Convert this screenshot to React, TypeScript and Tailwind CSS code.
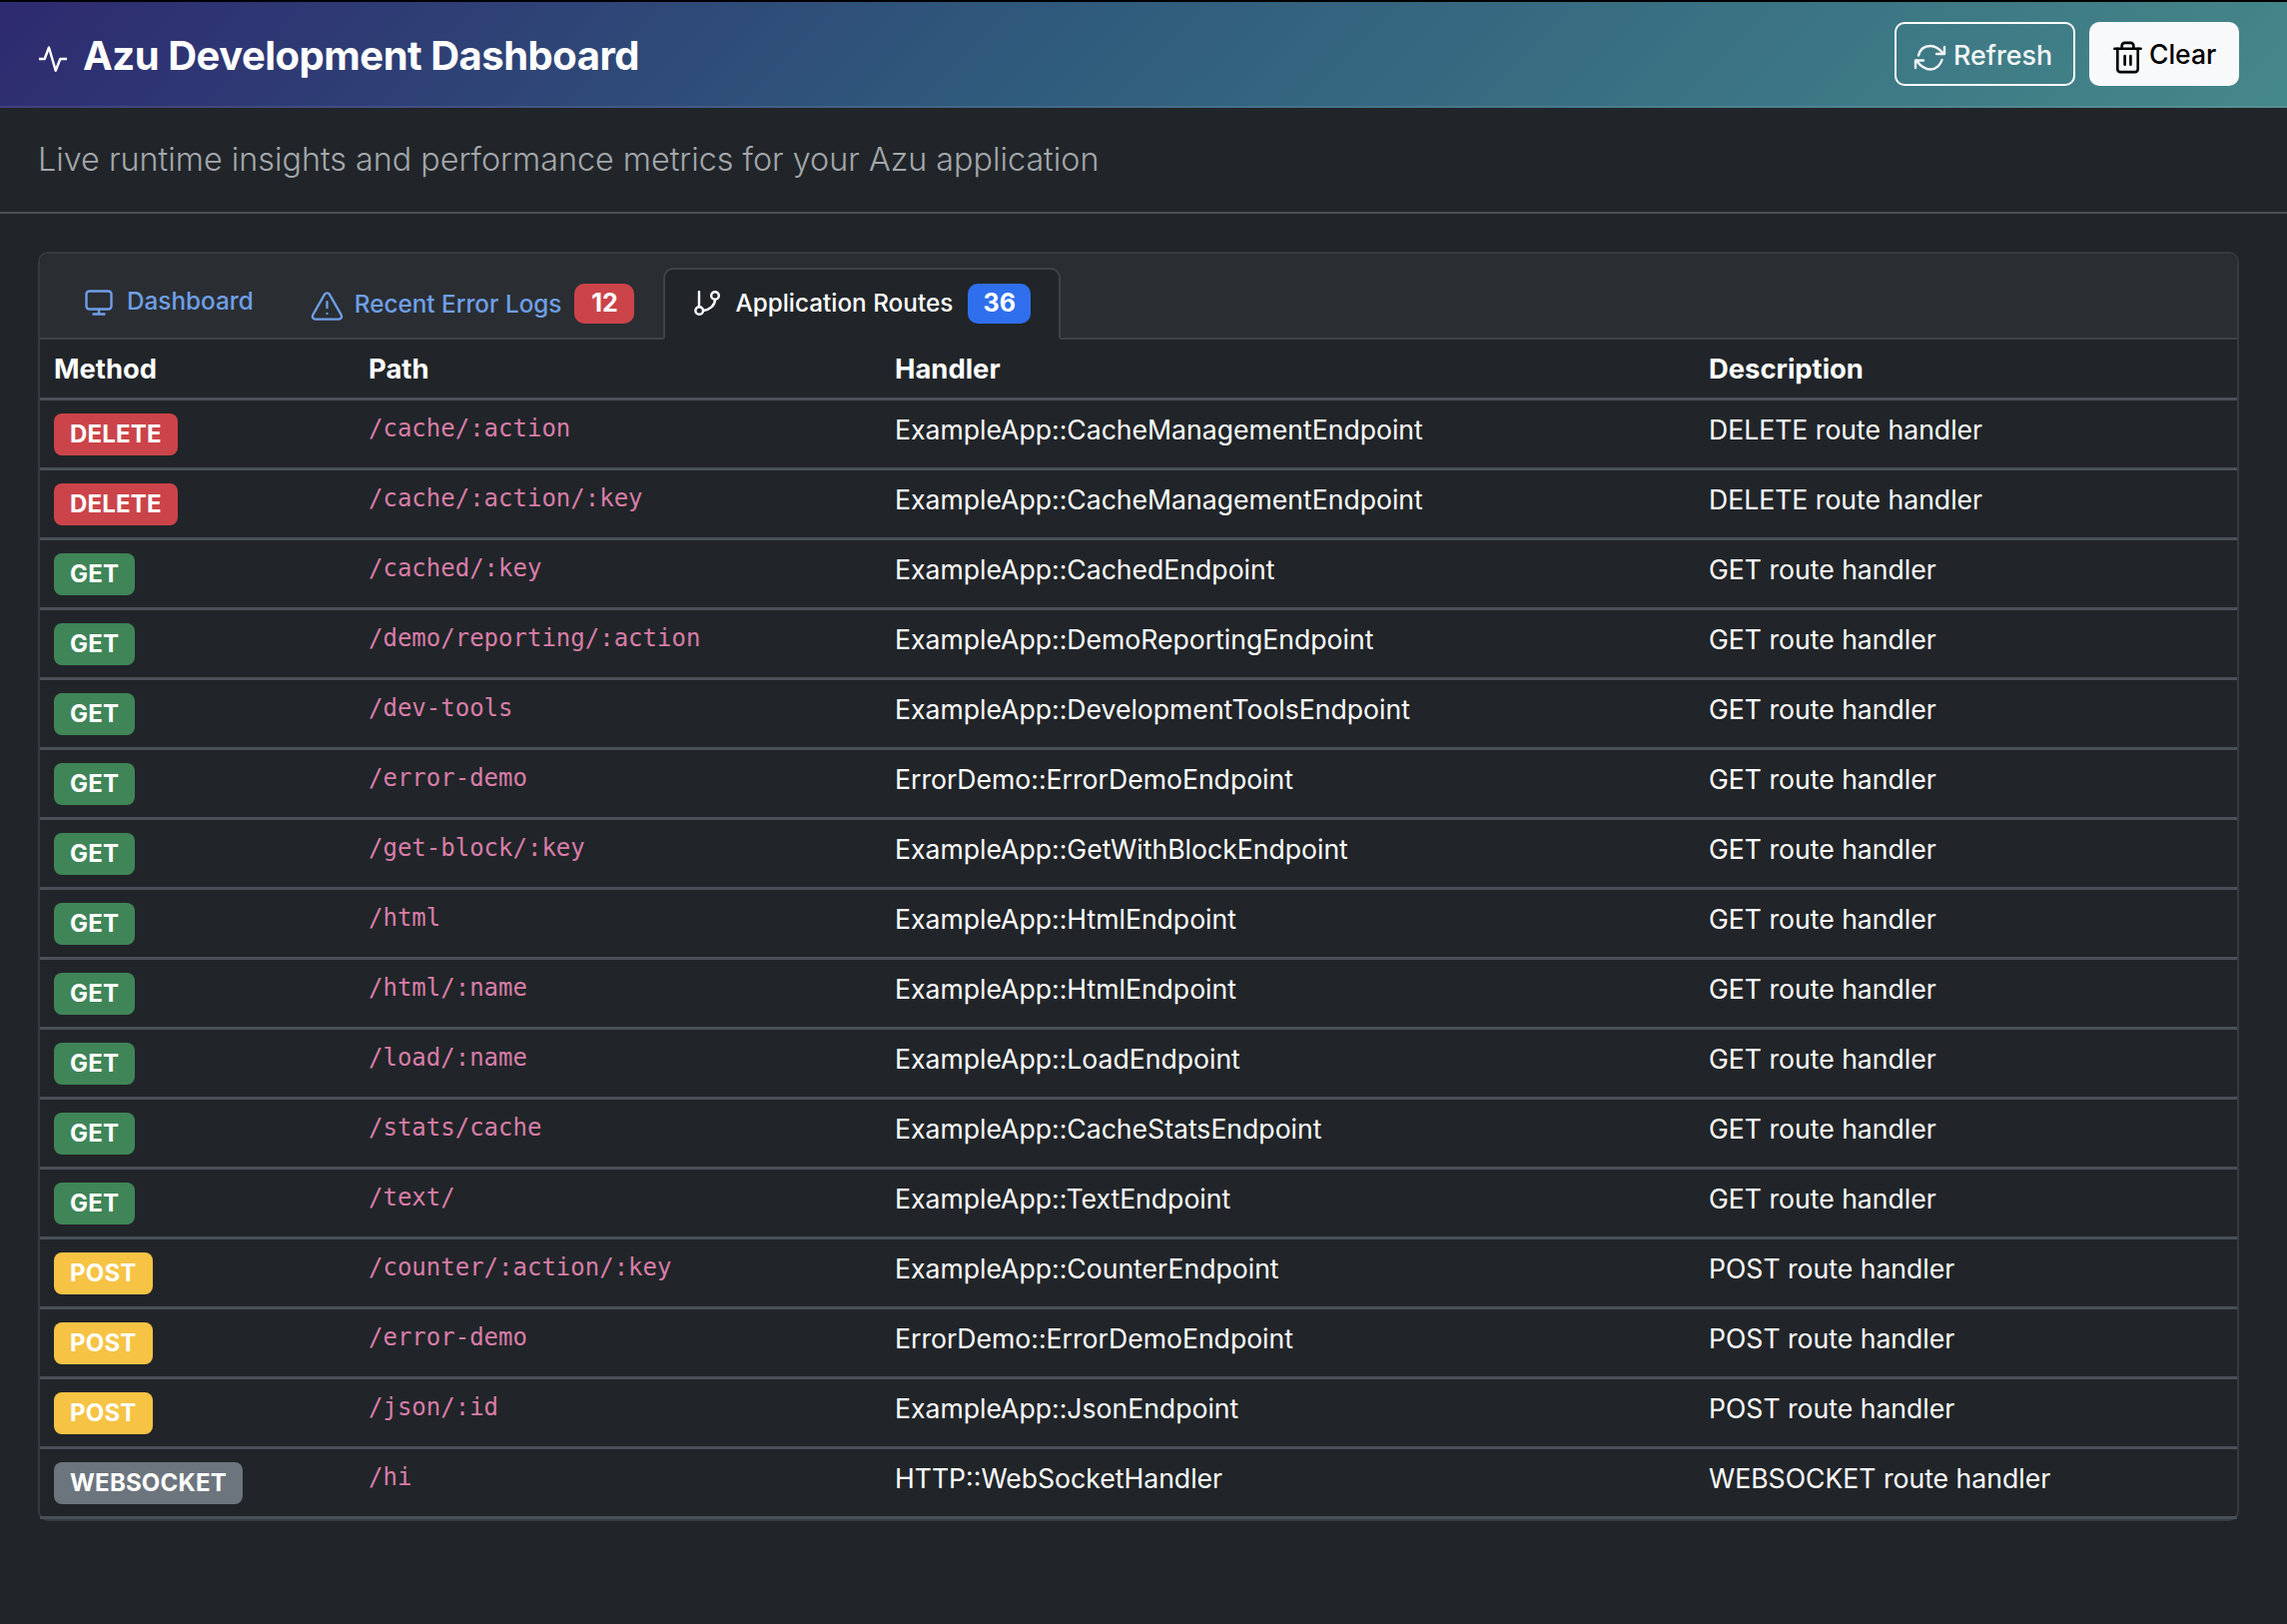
import { TriangleAlert, Trash2 } from "lucide-react";

interface Route {
  method: string;
  path: string;
  handler: string;
}

const routes: Route[] = [
  { method: "DELETE", path: "/cache/:action", handler: "ExampleApp::CacheManagementEndpoint" },
  { method: "DELETE", path: "/cache/:action/:key", handler: "ExampleApp::CacheManagementEndpoint" },
  { method: "GET", path: "/cached/:key", handler: "ExampleApp::CachedEndpoint" },
  { method: "GET", path: "/demo/reporting/:action", handler: "ExampleApp::DemoReportingEndpoint" },
  { method: "GET", path: "/dev-tools", handler: "ExampleApp::DevelopmentToolsEndpoint" },
  { method: "GET", path: "/error-demo", handler: "ErrorDemo::ErrorDemoEndpoint" },
  { method: "GET", path: "/get-block/:key", handler: "ExampleApp::GetWithBlockEndpoint" },
  { method: "GET", path: "/html", handler: "ExampleApp::HtmlEndpoint" },
  { method: "GET", path: "/html/:name", handler: "ExampleApp::HtmlEndpoint" },
  { method: "GET", path: "/load/:name", handler: "ExampleApp::LoadEndpoint" },
  { method: "GET", path: "/stats/cache", handler: "ExampleApp::CacheStatsEndpoint" },
  { method: "GET", path: "/text/", handler: "ExampleApp::TextEndpoint" },
  { method: "POST", path: "/counter/:action/:key", handler: "ExampleApp::CounterEndpoint" },
  { method: "POST", path: "/error-demo", handler: "ErrorDemo::ErrorDemoEndpoint" },
  { method: "POST", path: "/json/:id", handler: "ExampleApp::JsonEndpoint" },
  { method: "WEBSOCKET", path: "/hi", handler: "HTTP::WebSocketHandler" },
];

const methodColor: Record<string, string> = {
  DELETE: "bg-[#cb444a]",
  GET: "bg-[#408558]",
  POST: "bg-[#f6c344]",
  WEBSOCKET: "bg-[#6c757d]",
};

const PulseIcon = () => (
  <svg width="28" height="26" viewBox="0 0 28 26" fill="none" stroke="currentColor" strokeWidth="2.4" strokeLinejoin="round" className="mt-[10px] shrink-0">
    <path d="M0 13H5.7L10 1.5L16.7 24.7L21.3 13H28" />
  </svg>
);

const RefreshIcon = () => (
  <svg width="33" height="27" viewBox="0 0 33 27" fill="none" stroke="currentColor" strokeWidth="2.4" strokeLinecap="round" strokeLinejoin="round" className="mt-[4px] shrink-0">
    <path d="M5 11.5C6.5 5.5 11 2 17 2C21.5 2 26 5 30 9.5" />
    <path d="M31 3V10H23" />
    <path d="M3 17C7 22 11.5 25.5 17 25.5C22.5 25.5 27 21 28.5 16" />
    <path d="M2 24V16.5H10" />
  </svg>
);

const MonitorIcon = () => (
  <svg width="28" height="26" viewBox="0 0 28 26" fill="none" stroke="currentColor" strokeWidth="2.4" strokeLinecap="round" className="mt-[4px] shrink-0">
    <rect x="1.5" y="1.5" width="25" height="18" rx="3" />
    <path d="M14 20V24.5M8.5 24.5H19.5" />
  </svg>
);

const RouteIcon = () => (
  <svg width="26" height="25" viewBox="0 0 26 25" fill="none" stroke="currentColor" strokeWidth="2.4" strokeLinecap="round" className="shrink-0">
    <path d="M5 1V16" />
    <circle cx="5.2" cy="20" r="3.8" />
    <circle cx="21" cy="5" r="3.8" />
    <path d="M21 9C21 15 15.5 19 9.3 20" />
  </svg>
);

export default function App() {
  return (
    <div className="min-h-[1626px] bg-[#212529] font-['Inter',sans-serif] text-white">
      <header className="flex h-[108px] items-center justify-between border-t-2 border-b-2 border-t-black border-b-white/10 bg-[linear-gradient(135deg,#2e2a70_0%,#2f5a7c_45%,#45888a_100%)] pr-[48px] pl-[39px]">
        <div className="flex items-center gap-[16px]">
          <PulseIcon />
          <h1 className="pt-[3px] text-[40px] font-bold tracking-[-0.5px]">Azu Development Dashboard</h1>
        </div>
        <div className="flex gap-[14px]">
          <button className="flex h-[64px] w-[181px] items-center gap-[7px] rounded-[10px] border-2 border-white pt-[2px] pl-[17px] text-[26.8px] font-medium text-[#f3f6f7]">
            <RefreshIcon />
            Refresh
          </button>
          <button className="flex h-[64px] w-[150px] items-center gap-[4px] rounded-[10px] bg-[#f8f9fa] pt-[2px] pl-[21px] text-[26.5px] font-medium text-black">
            <Trash2 size={35} strokeWidth={1.8} className="mt-[4px] shrink-0" />
            Clear
          </button>
        </div>
      </header>

      <div className="flex h-[106px] items-center border-b-2 border-[#495057] pl-[38px]">
        <p className="text-[32.3px] font-light text-[#a4a8ac]">
          Live runtime insights and performance metrics for your Azu application
        </p>
      </div>

      <section className="mt-[38px] mr-[48px] ml-[38px] rounded-[10px] border-2 border-[#373b3f] bg-[#212529]">
        <nav className="flex h-[86px] items-end rounded-t-[10px] border-b-2 border-[#3f4347] bg-[#2a2e33] pl-[45px] text-[24.3px] font-medium text-[#6f9fe6]">
          <a className="mb-[17px] flex h-[40px] items-center gap-[14px]">
            <MonitorIcon />
            Dashboard
          </a>
          <a className="mb-[14px] ml-[56px] flex h-[40px] items-center gap-[10px]">
            <TriangleAlert size={35} strokeWidth={1.6} className="mt-[4px] shrink-0" />
            Recent Error Logs
            <span className="ml-[3px] flex h-[40px] w-[60px] items-center justify-center rounded-[10px] bg-[#cb444a] text-[25px] font-bold text-white">12</span>
          </a>
          <a className="mb-[-2px] ml-[29px] flex h-[72px] items-center gap-[15px] rounded-t-[10px] border-2 border-[#3f4347] border-b-[#212529] bg-[#212529] pr-[28px] pb-[1px] pl-[29px] text-white">
            <RouteIcon />
            Application Routes
            <span className="flex h-[40px] w-[63px] items-center justify-center rounded-[10px] bg-[#2f6fed] text-[25px] font-bold text-white">36</span>
          </a>
        </nav>

        <table className="w-full table-fixed border-collapse text-[26.6px]">
          <colgroup>
            <col className="w-[315px]" />
            <col className="w-[527px]" />
            <col className="w-[815px]" />
            <col />
          </colgroup>
          <thead>
            <tr className="h-[59px] border-b-3 border-[#495057] text-left text-[27.4px]">
              <th className="px-[14px] pt-[2px] font-bold">Method</th>
              <th className="px-[14px] pt-[2px] font-bold">Path</th>
              <th className="px-[14px] pt-[2px] font-bold">Handler</th>
              <th className="px-[14px] pt-[2px] font-bold">Description</th>
            </tr>
          </thead>
          <tbody>
            {routes.map((r) => (
              <tr key={r.method + r.path} className="h-[70px] border-b-3 border-[#495057]">
                <td className="px-[14px] pt-[1px] align-middle">
                  <span className={`inline-block rounded-[8px] px-[16px] py-[6px] text-[24px] leading-[30px] font-bold tracking-[0.2px] ${methodColor[r.method]}`}>
                    {r.method}
                  </span>
                </td>
                <td className="px-[14px] pb-[11px] align-middle font-['DejaVu_Sans_Mono',monospace] text-[24px] text-[#d87da8]">
                  {r.path}
                </td>
                <td className="px-[14px] pb-[6px] align-middle">{r.handler}</td>
                <td className="px-[14px] pb-[6px] align-middle">{r.method} route handler</td>
              </tr>
            ))}
          </tbody>
        </table>
      </section>
    </div>
  );
}
